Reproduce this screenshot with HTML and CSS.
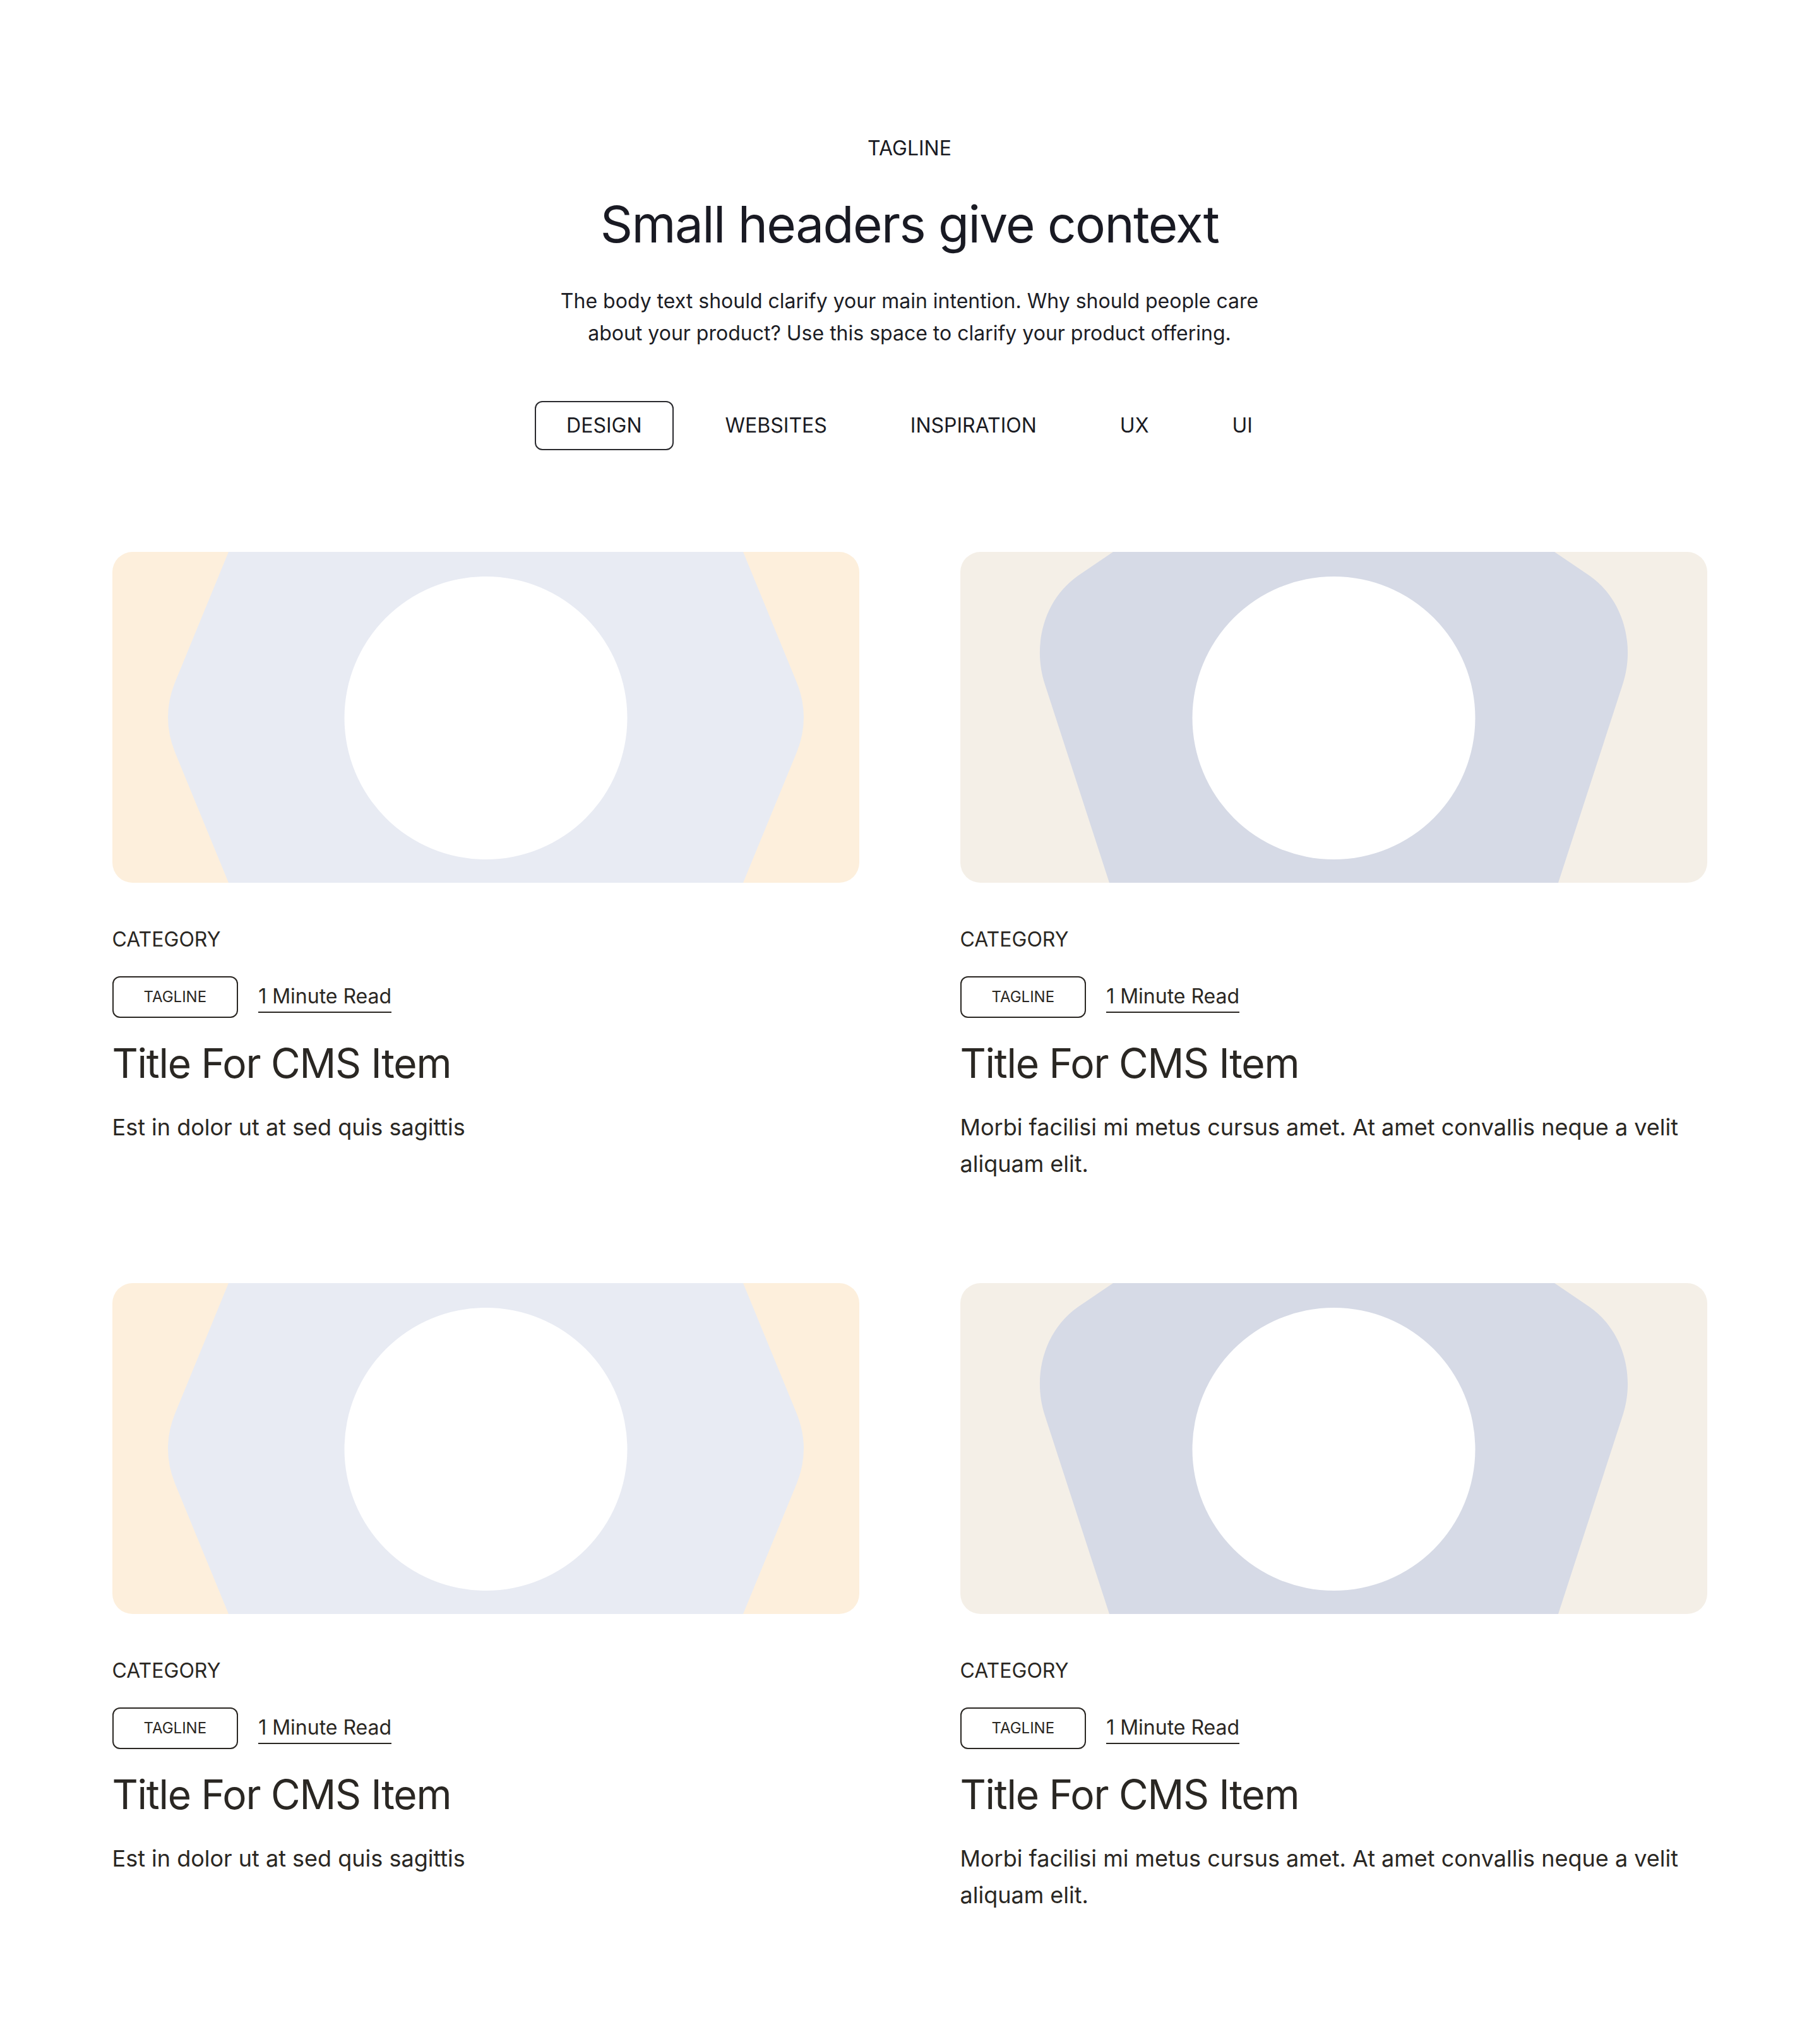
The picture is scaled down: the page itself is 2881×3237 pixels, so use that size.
FILE: index.html
```html
<!DOCTYPE html>
<html lang="en">
<head>
<meta charset="utf-8">
<title>Small headers give context</title>
<link rel="stylesheet" href="styles.css">
</head>
<body>
<section class="blog">
  <header class="intro">
    <p class="eyebrow">TAGLINE</p>
    <h2 class="heading">Small headers give context</h2>
    <p class="lead">The body text should clarify your main intention. Why should people care about your product? Use this space to clarify your product offering.</p>
  </header>

  <nav class="tabs">
    <button class="tab is-active">DESIGN</button>
    <button class="tab">WEBSITES</button>
    <button class="tab">INSPIRATION</button>
    <button class="tab">UX</button>
    <button class="tab">UI</button>
  </nav>

  <div class="grid">
    <article class="card">
      <div class="media media-a">
        <svg viewBox="0 0 1183 524" preserveAspectRatio="none" aria-hidden="true">
          <rect width="1183" height="524" fill="#FDEFDC"/>
          <path d="M184,0 H999 L1084,207 Q1106,262 1084,317 L999,524 H184 L99,317 Q77,262 99,207 Z" fill="#E8EBF3"/>
          <circle cx="591.5" cy="263" r="224" fill="#FFFFFF"/>
        </svg>
      </div>
      <p class="category">CATEGORY</p>
      <div class="meta"><span class="tag">TAGLINE</span><a class="read" href="#">1 Minute Read</a></div>
      <h3 class="title">Title For CMS Item</h3>
      <p class="desc">Est in dolor ut at sed quis sagittis</p>
    </article>

    <article class="card">
      <div class="media media-b">
        <svg viewBox="0 0 1183 524" preserveAspectRatio="none" aria-hidden="true">
          <rect width="1183" height="524" fill="#F4EFE7"/>
          <path d="M242,0 H941 L997,38 C1052,77 1069,150 1049,210 L947,524 H236 L134,210 C114,150 131,77 186,38 Z" fill="#D6DAE6"/>
          <circle cx="591.5" cy="263" r="224" fill="#FFFFFF"/>
        </svg>
      </div>
      <p class="category">CATEGORY</p>
      <div class="meta"><span class="tag">TAGLINE</span><a class="read" href="#">1 Minute Read</a></div>
      <h3 class="title">Title For CMS Item</h3>
      <p class="desc">Morbi facilisi mi metus cursus amet. At amet convallis neque a velit aliquam elit.</p>
    </article>

    <article class="card">
      <div class="media media-a">
        <svg viewBox="0 0 1183 524" preserveAspectRatio="none" aria-hidden="true">
          <rect width="1183" height="524" fill="#FDEFDC"/>
          <path d="M184,0 H999 L1084,207 Q1106,262 1084,317 L999,524 H184 L99,317 Q77,262 99,207 Z" fill="#E8EBF3"/>
          <circle cx="591.5" cy="263" r="224" fill="#FFFFFF"/>
        </svg>
      </div>
      <p class="category">CATEGORY</p>
      <div class="meta"><span class="tag">TAGLINE</span><a class="read" href="#">1 Minute Read</a></div>
      <h3 class="title">Title For CMS Item</h3>
      <p class="desc">Est in dolor ut at sed quis sagittis</p>
    </article>

    <article class="card">
      <div class="media media-b">
        <svg viewBox="0 0 1183 524" preserveAspectRatio="none" aria-hidden="true">
          <rect width="1183" height="524" fill="#F4EFE7"/>
          <path d="M242,0 H941 L997,38 C1052,77 1069,150 1049,210 L947,524 H236 L134,210 C114,150 131,77 186,38 Z" fill="#D6DAE6"/>
          <circle cx="591.5" cy="263" r="224" fill="#FFFFFF"/>
        </svg>
      </div>
      <p class="category">CATEGORY</p>
      <div class="meta"><span class="tag">TAGLINE</span><a class="read" href="#">1 Minute Read</a></div>
      <h3 class="title">Title For CMS Item</h3>
      <p class="desc">Morbi facilisi mi metus cursus amet. At amet convallis neque a velit aliquam elit.</p>
    </article>
  </div>
</section>
</body>
</html>
```

FILE: styles.css
```css
* {
  box-sizing: border-box;
}

html,
body {
  margin: 0;
  padding: 0;
  background: #ffffff;
}

body {
  font-family: Inter, "Noto Sans", "Liberation Sans", sans-serif;
  color: #1a1b23;
}

.blog {
  padding: 211px 0 209px;
}

.intro {
  display: flex;
  flex-direction: column;
  align-items: center;
  text-align: center;
}

.eyebrow {
  margin: 0;
  font-size: 32px;
  line-height: 48px;
  color: #1a1b23;
}

.heading {
  margin: 48px 0 0;
  font-size: 80px;
  line-height: 96px;
  font-weight: 400;
  letter-spacing: -1.6px;
  color: #191a23;
}

.lead {
  margin: 48px 0 0;
  max-width: 1120px;
  font-size: 32px;
  line-height: 51.2px;
  color: #1c1d25;
}

.tabs {
  display: flex;
  justify-content: center;
  gap: 32px;
  margin-top: 82px;
}

.tab {
  font-family: inherit;
  font-size: 32px;
  line-height: 48px;
  padding: 13px 48px;
  border: 2px solid transparent;
  border-radius: 12px;
  background: transparent;
  color: #1a1b23;
  cursor: pointer;
}

.tab.is-active {
  border-color: #2a2a2e;
}

.grid {
  width: 2526px;
  margin: 161px auto 0;
  display: grid;
  grid-template-columns: 1183px 1183px;
  column-gap: 160px;
  row-gap: 160px;
  align-items: start;
}

.card {
  color: #2a2723;
}

.media {
  border-radius: 32px;
  overflow: hidden;
  height: 524px;
}

.media svg {
  display: block;
  width: 100%;
  height: 100%;
}

.category {
  margin: 66px 0 0;
  font-size: 32px;
  line-height: 48px;
}

.meta {
  margin-top: 34px;
  display: flex;
  align-items: center;
  gap: 32px;
}

.tag {
  display: inline-block;
  font-size: 24px;
  line-height: 38px;
  padding: 12px 48px;
  border: 2px solid #2a2723;
  border-radius: 12px;
}

.read {
  font-size: 32px;
  line-height: 48px;
  color: #2a2723;
  text-decoration: none;
  border-bottom: 2px solid #2a2723;
}

.title {
  margin: 34px 0 0;
  font-size: 64px;
  line-height: 76.8px;
  font-weight: 400;
  letter-spacing: -1.28px;
}

.desc {
  margin: 34px 0 0;
  font-size: 36px;
  line-height: 57.6px;
}
```
